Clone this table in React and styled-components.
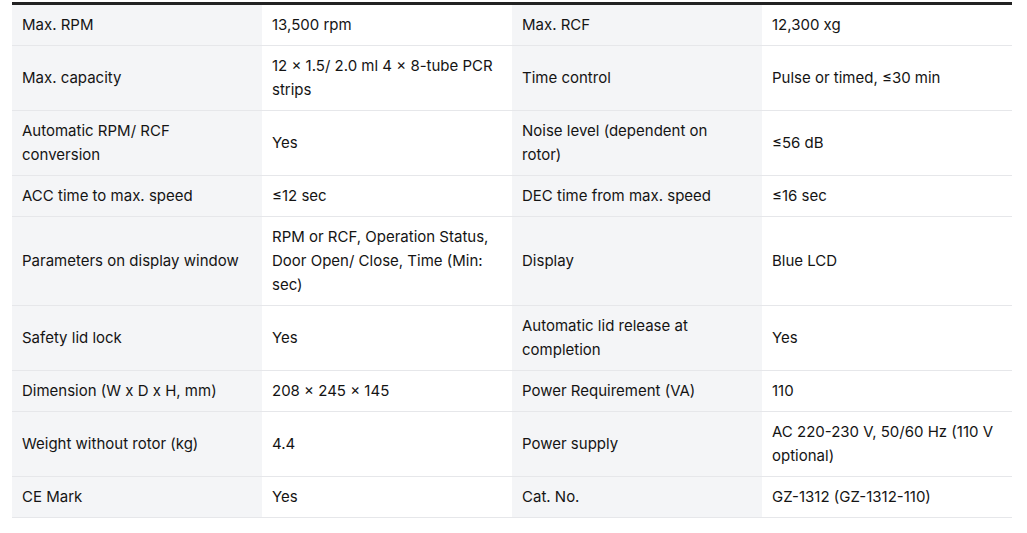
import React from "react";
import styled, { createGlobalStyle } from "styled-components";

const Global = createGlobalStyle`
  html, body { margin: 0; padding: 0; background: #ffffff; }
  body { font-family: Inter, "Noto Sans", sans-serif; }
`;

const Wrap = styled.div`
  padding: 2px 12px 0 12px;
`;

const Table = styled.table`
  width: 1000px;
  table-layout: fixed;
  border-collapse: collapse;
  border-top: 3px solid #222222;
  font-family: Inter, "Noto Sans", sans-serif;
  font-size: 15px;
  line-height: 24px;
  color: #141414;
`;

const Col = styled.col`
  width: 250px;
`;

const Row = styled.tr`
  border-bottom: 1px solid #e6e7ea;
`;

const Cell = styled.td`
  padding: 8px 16px 8px 10px;
  vertical-align: middle;
  overflow-wrap: break-word;
  background: ${(p) => (p.$label ? "#f4f5f7" : "#ffffff")};
`;

const rows = [
  ["Max. RPM", "13,500 rpm", "Max. RCF", "12,300 xg"],
  ["Max. capacity", "12 × 1.5/ 2.0 ml 4 × 8-tube PCR strips", "Time control", "Pulse or timed, ≤30 min"],
  ["Automatic RPM/ RCF conversion", "Yes", "Noise level (dependent on rotor)", "≤56 dB"],
  ["ACC time to max. speed", "≤12 sec", "DEC time from max. speed", "≤16 sec"],
  ["Parameters on display window", "RPM or RCF, Operation Status, Door Open/ Close, Time (Min: sec)", "Display", "Blue LCD"],
  ["Safety lid lock", "Yes", "Automatic lid release at completion", "Yes"],
  ["Dimension (W x D x H, mm)", "208 × 245 × 145", "Power Requirement (VA)", "110"],
  ["Weight without rotor (kg)", "4.4", "Power supply", "AC 220-230 V, 50/60 Hz (110 V optional)"],
  ["CE Mark", "Yes", "Cat. No.", "GZ-1312 (GZ-1312-110)"],
];

export default function App() {
  return (
    <Wrap>
      <Global />
      <Table>
        <colgroup>
          <Col />
          <Col />
          <Col />
          <Col />
        </colgroup>
        <tbody>
          {rows.map((r, i) => (
            <Row key={i}>
              {r.map((c, j) => (
                <Cell key={j} $label={j % 2 === 0}>
                  {c}
                </Cell>
              ))}
            </Row>
          ))}
        </tbody>
      </Table>
    </Wrap>
  );
}
